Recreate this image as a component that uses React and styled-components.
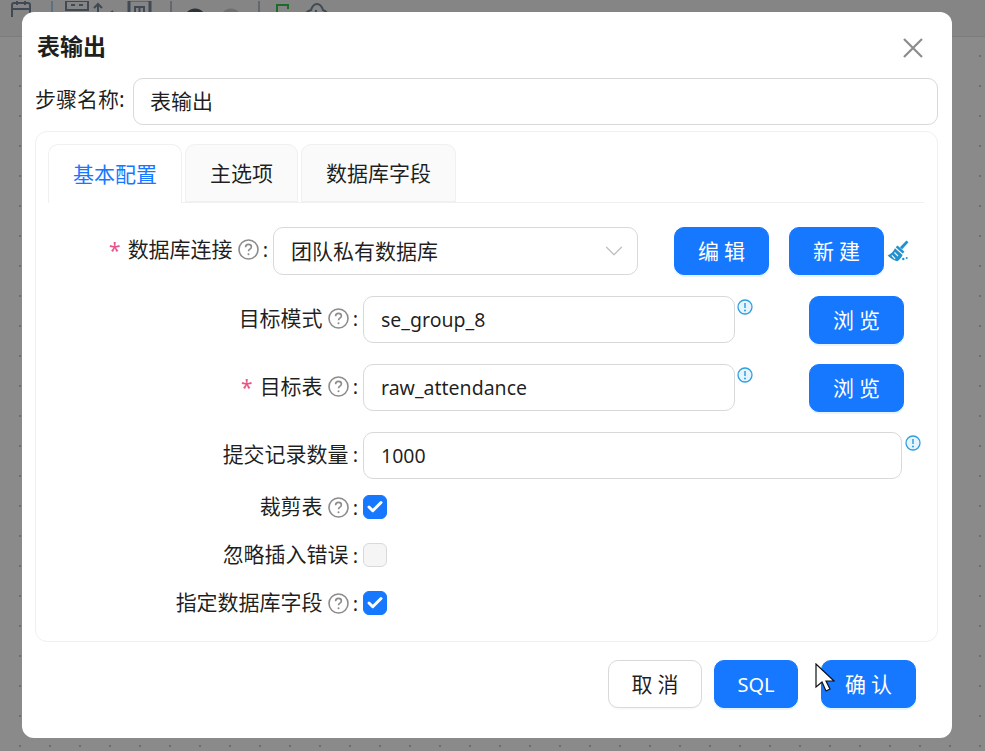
import React from 'react';
import styled, { createGlobalStyle } from 'styled-components';
import { ChevronDown, Check } from 'lucide-react';

const GlobalStyle = createGlobalStyle`
  html, body {
    margin: 0;
    padding: 0;
    height: 100%;
    overflow: hidden;
    font-family: "Noto Sans", "Noto Sans CJK SC", sans-serif;
  }
`;

const Page = styled.div`
  position: relative;
  width: 985px;
  height: 751px;
  overflow: hidden;
  background-color: #8a8a8a;
  background-image: radial-gradient(circle, #6e6e6e 1px, transparent 1.2px);
  background-size: 30px 30px;
  background-position: 5px 11px;
`;

const Toolbar = styled.div`
  height: 36px;
  background: #858585;
  border-bottom: 1px solid #7c7c7c;
  overflow: hidden;
`;

const Modal = styled.div`
  position: absolute;
  left: 22px;
  top: 12px;
  width: 930px;
  height: 726px;
  box-sizing: border-box;
  padding: 0 14px 0 13px;
  background: #fff;
  border-radius: 12px;
  color: rgba(0, 0, 0, 0.88);
`;

const Header = styled.div`
  display: flex;
  align-items: center;
  justify-content: space-between;
  height: 66px;
  padding: 0 15px 0 2px;
`;

const Title = styled.div`
  font-size: 23px;
  font-weight: 700;
  color: #1f1f1f;
`;

const CloseButton = styled.button`
  display: flex;
  margin-top: 6px;
  padding: 0;
  border: 0;
  background: none;
  color: #8c8c8c;
`;

const NameRow = styled.div`
  display: flex;
  align-items: center;
  margin-bottom: 6px;
`;

const NameLabel = styled.span`
  flex: none;
  width: 98px;
  margin-bottom: 5px;
  font-size: 21px;
  line-height: 28px;
  white-space: nowrap;
`;

const LabelText = styled.span`
  margin-bottom: 2px;
  font-size: 21px;
  line-height: 28px;
  white-space: nowrap;
`;

const TextInput = styled.input`
  box-sizing: border-box;
  align-self: flex-start;
  width: ${(p) => p.$width}px;
  height: 47px;
  padding: 0 16px 0 17px;
  border: 1px solid #d9d9d9;
  border-radius: 10px;
  outline: none;
  background: #fff;
  color: rgba(0, 0, 0, 0.88);
  font-family: "Noto Sans", "Noto Sans CJK SC", sans-serif;
  font-size: 19.5px;
`;

const NameInput = styled(TextInput)`
  padding: 0 16px 3px 16px;
  font-size: 21px;
`;

const Card = styled.div`
  box-sizing: border-box;
  height: 511px;
  padding: 12px 13px 0 12px;
  border: 1px solid #f0f0f0;
  border-radius: 12px;
`;

const TabBar = styled.div`
  display: flex;
  gap: 3px;
  height: 58px;
  border-bottom: 1px solid #f0f0f0;
`;

const Tab = styled.div`
  display: flex;
  align-items: center;
  justify-content: center;
  box-sizing: border-box;
  width: ${(p) => p.$width}px;
  height: ${(p) => (p.$active ? 59 : 58)}px;
  padding-bottom: 3px;
  border: 1px solid #f0f0f0;
  border-bottom: ${(p) => (p.$active ? '0' : '1px solid #f0f0f0')};
  border-radius: 10px 10px 0 0;
  background: ${(p) => (p.$active ? '#fff' : '#fafafa')};
  color: ${(p) => (p.$active ? '#1677ff' : 'rgba(0, 0, 0, 0.88)')};
  font-size: 21px;
`;

const Form = styled.div`
  padding-top: 24px;
`;

const Row = styled.div`
  display: flex;
  align-items: center;
  height: 48px;
  margin-bottom: ${(p) => p.$gap || 0}px;
`;

const Label = styled.div`
  display: flex;
  align-items: center;
  justify-content: flex-end;
  flex: none;
  width: ${(p) => p.$width}px;
  margin-right: 5px;
  margin-bottom: ${(p) => (p.$lift ? 3 : 0)}px;
`;

const Star = styled.span`
  margin-right: 7px;
  color: #e8548a;
  font-size: 21px;
  line-height: 20px;
`;

const Colon = styled.span`
  margin-left: 4px;
  font-size: 20px;
`;

const HelpWrap = styled.span`
  display: flex;
  margin-left: 5px;
  color: #8c8c8c;
`;

const Select = styled.div`
  display: flex;
  align-items: center;
  justify-content: space-between;
  box-sizing: border-box;
  width: 365px;
  height: 48px;
  padding: 0 8px 0 17px;
  border: 1px solid #d9d9d9;
  border-radius: 10px;
  font-size: 21px;
  color: #bfbfbf;
`;

const SelectValue = styled.span`
  margin-bottom: 3px;
  color: rgba(0, 0, 0, 0.88);
`;

const Button = styled.button`
  box-sizing: border-box;
  flex: none;
  width: ${(p) => p.$width}px;
  height: 48px;
  margin-left: ${(p) => p.$left || 0}px;
  padding: 0 0 ${(p) => (p.$spaced ? 2 : 0)}px;
  border: 1px solid ${(p) => (p.$plain ? '#d9d9d9' : '#1677ff')};
  border-radius: 10px;
  background: ${(p) => (p.$plain ? '#fff' : '#1677ff')};
  box-shadow: 0 2px 0 ${(p) => (p.$plain ? 'rgba(0, 0, 0, 0.02)' : 'rgba(5, 145, 255, 0.1)')};
  color: ${(p) => (p.$plain ? 'rgba(0, 0, 0, 0.88)' : '#fff')};
  font-family: "Noto Sans", "Noto Sans CJK SC", sans-serif;
  font-size: ${(p) => (p.$spaced ? 21 : 20)}px;
  letter-spacing: ${(p) => (p.$spaced ? '5px' : '0')};
  text-indent: ${(p) => (p.$spaced ? '5px' : '0')};
`;

const InfoWrap = styled.span`
  display: flex;
  align-self: flex-start;
  margin: 3px 0 0 ${(p) => p.$left}px;
  color: #2f9fe0;
`;

const BroomWrap = styled.span`
  display: flex;
  margin-left: 3px;
  color: #2191cf;
`;

const CheckBox = styled.span`
  display: flex;
  align-items: center;
  justify-content: center;
  box-sizing: border-box;
  width: 24px;
  height: 24px;
  margin-bottom: 1px;
  border: 1px solid ${(p) => (p.$checked ? '#1677ff' : '#d9d9d9')};
  border-radius: 6px;
  background: ${(p) => (p.$checked ? '#1677ff' : '#f5f5f5')};
  color: #fff;
`;

const Footer = styled.div`
  display: flex;
  justify-content: flex-end;
  padding: 18px 22px 0 0;
`;

const Cursor = styled.svg`
  position: absolute;
  left: 793px;
  top: 651px;
`;

const ToolIcons = () => (
  <svg width="340" height="16" viewBox="0 0 340 16" fill="none" stroke="#3f4a55" strokeWidth="2">
    <rect x="12" y="2" width="18" height="18" rx="2" />
    <path d="M17 0v4M25 0v4M12 8h18" />
    <path d="M52 0v16" stroke="#2f5f86" strokeWidth="1" />
    <rect x="66" y="0" width="22" height="9" />
    <path d="M71 4h4M79 4h4" />
    <path d="M98 16V3M94 7l4-4 4 4M106 16l7-6" />
    <rect x="129" y="-1" width="21" height="19" strokeWidth="3" />
    <path d="M135 16V6h9v10M139.500 6v7" />
    <path d="M171 0v16" strokeWidth="1" />
    <path d="M186 16c2-6 8-8 13-6 2 1 4 3 5 6" strokeWidth="3.500" stroke="#2c333a" />
    <path d="M240 16c-2-6-8-8-13-6-2 1-4 3-5 6" stroke="#6f6f6f" strokeWidth="3.500" />
    <path d="M259 0v16" strokeWidth="1" />
    <path d="M277 16V4h11v4M274 13h17" stroke="#1c6b2a" />
    <path d="M305 16c0-4 3-6 6-7 1-3 3-6 6-6s5 3 6 6c3 1 5 3 5 7M316 9v7" />
  </svg>
);

const HelpIcon = () => (
  <HelpWrap>
    <svg width="21" height="21" viewBox="0 0 21 21" fill="none" stroke="currentColor">
      <circle cx="10.500" cy="10.500" r="9.500" strokeWidth="1.600" />
      <path d="M7.600 8.200c0-1.700 1.300-2.800 2.900-2.800s2.900 1 2.900 2.500c0 2.300-2.900 2.300-2.900 4.400" strokeWidth="1.600" />
      <circle cx="10.500" cy="15.300" r="1" fill="currentColor" stroke="none" />
    </svg>
  </HelpWrap>
);

const InfoIcon = ({ left }) => (
  <InfoWrap $left={left}>
    <svg width="16" height="16" viewBox="0 0 16 16" fill="#e6f4ff" stroke="currentColor">
      <circle cx="8" cy="8" r="7" strokeWidth="1.300" />
      <path d="M8 4v5" strokeWidth="1.500" />
      <circle cx="8" cy="11.400" r="1" fill="currentColor" stroke="none" />
    </svg>
  </InfoWrap>
);

const BroomIcon = () => (
  <BroomWrap>
    <svg width="22" height="24" viewBox="0 0 22 24" fill="currentColor">
      <path d="M19.500 1.500l2 1.800-6.300 7-2.300-2.100z" />
      <path d="M10.500 6.500l7 6.300-1.900 1.700-6.900-6.200z" />
      <path d="M8 9.200l7.600 6.800c-1.400 2.700-3 4.700-5.100 6.200-3.200-.5-7-2.700-9.900-5.700 3.300-1.300 5.500-3.700 7.400-7.300z" />
      <path d="M7.500 13.500l3.500 3.700M4.800 16.300l3.300 3.500" stroke="#fff" strokeWidth="1.100" />
      <circle cx="16.300" cy="20" r="1.200" />
      <circle cx="19.700" cy="19" r="1" />
    </svg>
  </BroomWrap>
);

const CloseIcon = () => (
  <svg width="20" height="20" viewBox="0 0 20 20" stroke="currentColor" strokeWidth="2.200">
    <path d="M1 1l18 18M19 1L1 19" />
  </svg>
);

const Tick = () => <Check size={18} strokeWidth={4} />;

const App = () => {
  return (
    <Page>
      <GlobalStyle />
      <Toolbar>
        <ToolIcons />
      </Toolbar>
      <Modal>
        <Header>
          <Title>表输出</Title>
          <CloseButton>
            <CloseIcon />
          </CloseButton>
        </Header>
        <NameRow>
          <NameLabel>步骤名称:</NameLabel>
          <NameInput $width={805} defaultValue="表输出" />
        </NameRow>
        <Card>
          <TabBar>
            <Tab $width={134} $active>基本配置</Tab>
            <Tab $width={113}>主选项</Tab>
            <Tab $width={155}>数据库字段</Tab>
          </TabBar>
          <Form>
            <Row $gap={21}>
              <Label $width={220} $lift>
                <Star>*</Star>
                <LabelText>数据库连接</LabelText>
                <HelpIcon />
                <Colon>:</Colon>
              </Label>
              <Select>
                <SelectValue>团队私有数据库</SelectValue>
                <ChevronDown size={30} strokeWidth={1} />
              </Select>
              <Button $width={95} $left={36} $spaced>编辑</Button>
              <Button $width={95} $left={20} $spaced>新建</Button>
              <BroomIcon />
            </Row>
            <Row $gap={20}>
              <Label $width={310} $lift>
                <LabelText>目标模式</LabelText>
                <HelpIcon />
                <Colon>:</Colon>
              </Label>
              <TextInput $width={372} defaultValue="se_group_8" />
              <InfoIcon left={2} />
              <Button $width={95} $left={56} $spaced>浏览</Button>
            </Row>
            <Row $gap={20}>
              <Label $width={310} $lift>
                <Star>*</Star>
                <LabelText>目标表</LabelText>
                <HelpIcon />
                <Colon>:</Colon>
              </Label>
              <TextInput $width={372} defaultValue="raw_attendance" />
              <InfoIcon left={2} />
              <Button $width={95} $left={56} $spaced>浏览</Button>
            </Row>
            <Row $gap={3}>
              <Label $width={310} $lift>
                <LabelText>提交记录数量</LabelText>
                <Colon>:</Colon>
              </Label>
              <TextInput $width={539} defaultValue="1000" />
              <InfoIcon left={3} />
            </Row>
            <Row>
              <Label $width={310}>
                <LabelText>裁剪表</LabelText>
                <HelpIcon />
                <Colon>:</Colon>
              </Label>
              <CheckBox $checked><Tick /></CheckBox>
            </Row>
            <Row>
              <Label $width={310}>
                <LabelText>忽略插入错误</LabelText>
                <Colon>:</Colon>
              </Label>
              <CheckBox />
            </Row>
            <Row>
              <Label $width={310}>
                <LabelText>指定数据库字段</LabelText>
                <HelpIcon />
                <Colon>:</Colon>
              </Label>
              <CheckBox $checked><Tick /></CheckBox>
            </Row>
          </Form>
        </Card>
        <Footer>
          <Button $width={94} $plain $spaced>取消</Button>
          <Button $width={84} $left={12}>SQL</Button>
          <Button $width={95} $left={23} $spaced>确认</Button>
        </Footer>
        <Cursor width="20" height="30" viewBox="0 0 20 30">
          <path d="M1 1v23l6-5 4 9 4-2-4-8h8z" fill="#fff" stroke="#111" strokeWidth="1.200" />
        </Cursor>
      </Modal>
    </Page>
  );
};

export default App;
